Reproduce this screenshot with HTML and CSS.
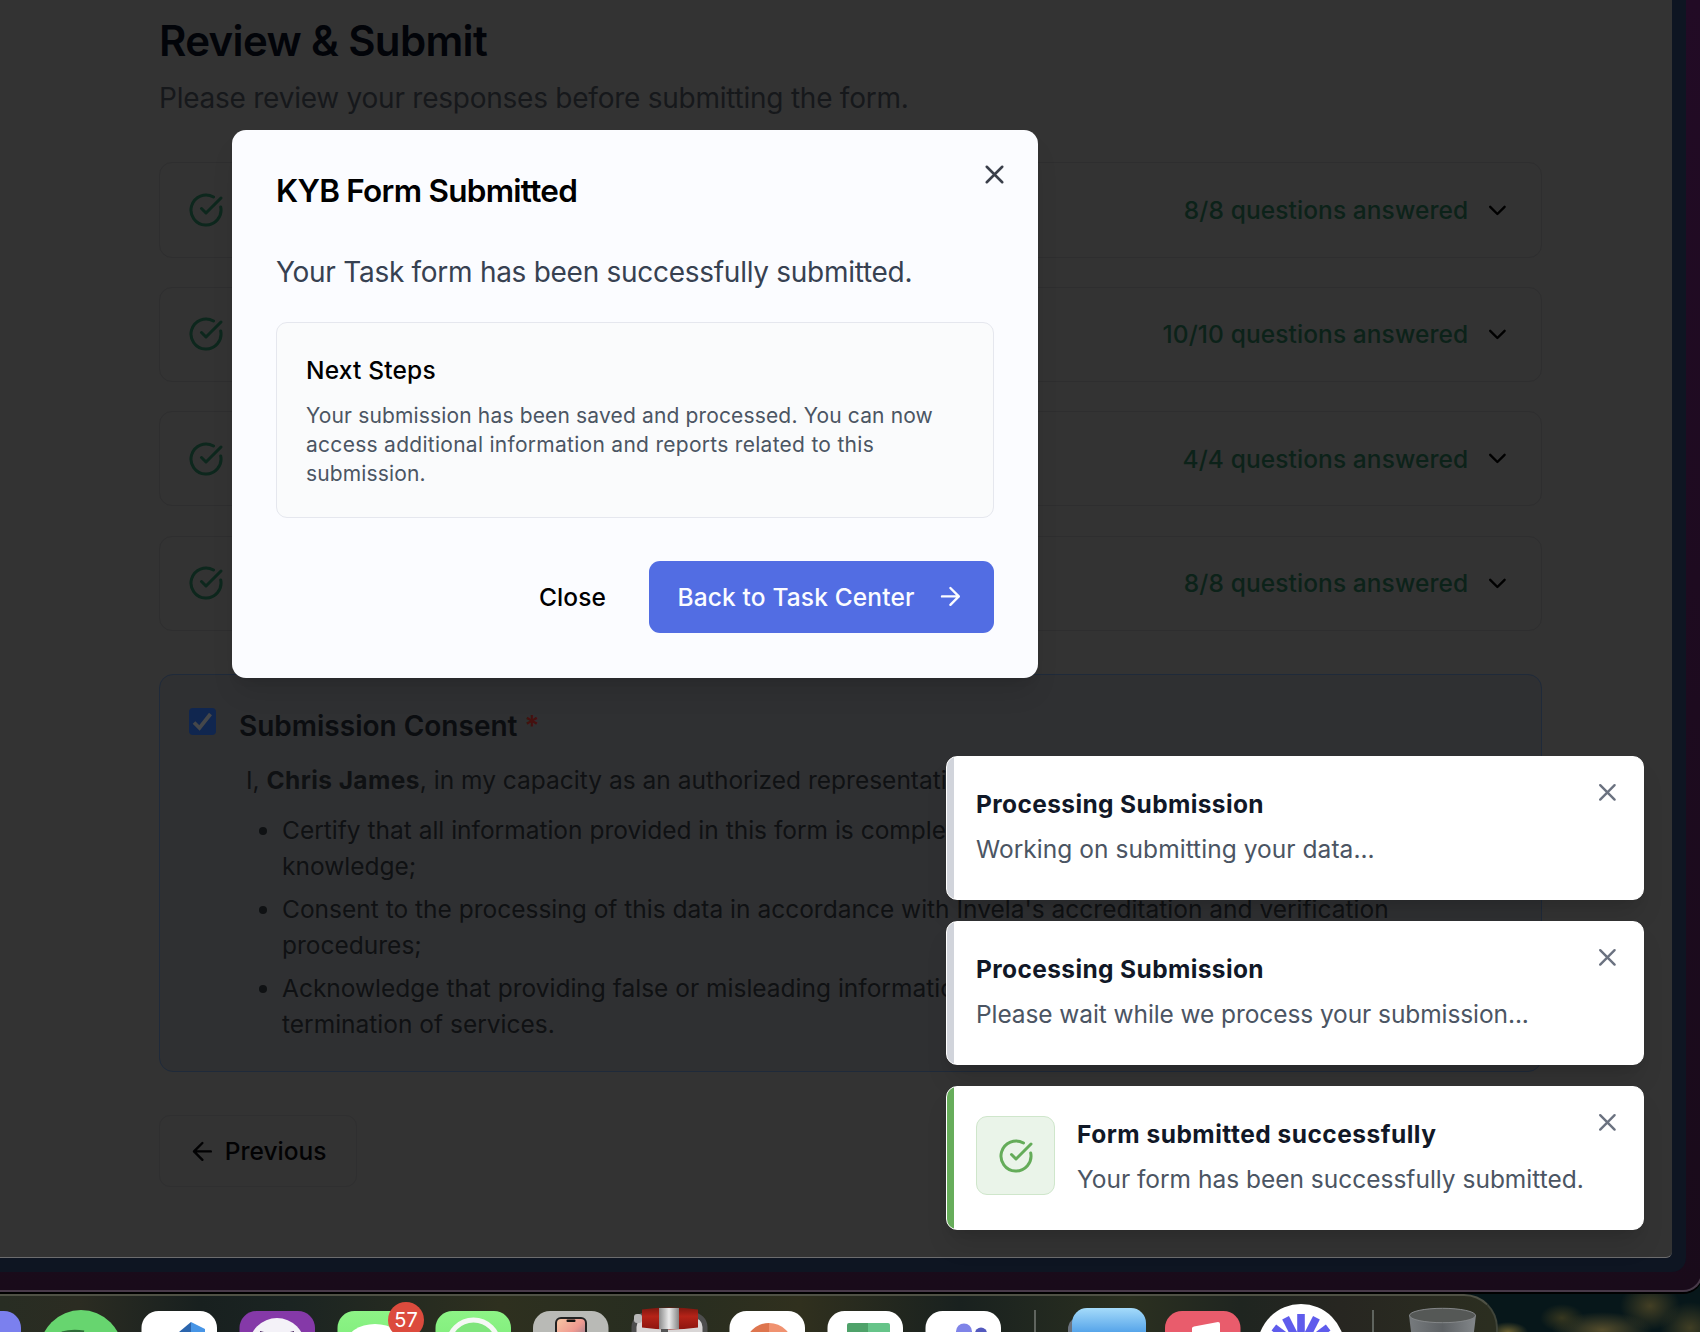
FILE: index.html
```
<!DOCTYPE html>
<html lang="en">
<head>
<meta charset="utf-8">
<title>KYB Form</title>
<link rel="stylesheet" href="styles.css">
</head>
<body>
<svg width="0" height="0" class="defs" aria-hidden="true">
  <symbol id="check" viewBox="0 0 24 24"><path d="M21.801 10A10 10 0 1 1 17 3.335"/><path d="m9 11 3 3L22 4"/></symbol>
  <symbol id="chevron" viewBox="0 0 24 24"><path d="m6 9 6 6 6-6"/></symbol>
  <symbol id="x" viewBox="0 0 24 24"><path d="M18 6 6 18M6 6l12 12"/></symbol>
</svg>
<div class="desktop">
  <div class="outer-window">
    <div class="inner-window">
      <main class="page">
        <h1 class="title">Review &amp; Submit</h1>
        <p class="subtitle">Please review your responses before submitting the form.</p>
        <div class="rows">
          <div class="row"><svg class="icon row-check"><use href="#check"/></svg><span class="count">8/8 questions answered</span><svg class="icon chevron"><use href="#chevron"/></svg></div>
          <div class="row"><svg class="icon row-check"><use href="#check"/></svg><span class="count">10/10 questions answered</span><svg class="icon chevron"><use href="#chevron"/></svg></div>
          <div class="row"><svg class="icon row-check"><use href="#check"/></svg><span class="count">4/4 questions answered</span><svg class="icon chevron"><use href="#chevron"/></svg></div>
          <div class="row"><svg class="icon row-check"><use href="#check"/></svg><span class="count">8/8 questions answered</span><svg class="icon chevron"><use href="#chevron"/></svg></div>
        </div>
        <section class="consent">
          <span class="checkbox"><svg viewBox="0 0 27 27"><path d="M5 14.500 10.500 20 21.500 6"/></svg></span>
          <div class="consent-body">
            <h2 class="consent-title">Submission Consent <span class="star">*</span></h2>
            <p class="consent-intro">I, <strong>Chris James</strong>, in my capacity as an authorized representative:</p>
            <ul class="consent-list">
              <li>Certify that all information provided in this form is complete and accurate to my<br>knowledge;</li>
              <li>Consent to the processing of this data in accordance with Invela's accreditation and verification<br>procedures;</li>
              <li>Acknowledge that providing false or misleading information may result in<br>termination of services.</li>
            </ul>
          </div>
        </section>
        <button class="previous"><svg class="icon arrow" viewBox="0 0 24 24"><path d="m12 19-7-7 7-7M19 12H5"/></svg><span>Previous</span></button>
      </main>
    </div>
  </div>

  <footer class="dock">
    <svg width="1500" height="38" viewBox="0 1294 1500 38">
      <defs>
        <linearGradient id="wa" x1="0" y1="0" x2="0" y2="1"><stop offset="0" stop-color="#8df486"/><stop offset="1" stop-color="#70e36f"/></linearGradient>
        <linearGradient id="sky" x1="0" y1="0" x2="0" y2="1"><stop offset="0" stop-color="#a5dbfa"/><stop offset=".35" stop-color="#4e9fe8"/></linearGradient>
        <linearGradient id="chrome" x1="0" y1="0" x2="1" y2="0"><stop offset="0" stop-color="#8b8b8b"/><stop offset=".5" stop-color="#ececec"/><stop offset="1" stop-color="#858585"/></linearGradient>
        <linearGradient id="red" x1="0" y1="0" x2="0" y2="1"><stop offset="0" stop-color="#7c170f"/><stop offset=".4" stop-color="#b52318"/><stop offset="1" stop-color="#8d150e"/></linearGradient>
        <linearGradient id="bin" x1="0" y1="0" x2="1" y2="0"><stop offset="0" stop-color="#777b7e"/><stop offset=".5" stop-color="#5d6164"/><stop offset="1" stop-color="#83878a"/></linearGradient>
        <linearGradient id="phone" x1="0" y1="0" x2="1" y2="1"><stop offset="0" stop-color="#f7c9a5"/><stop offset=".5" stop-color="#ef9a91"/><stop offset="1" stop-color="#6c6f8c"/></linearGradient>
      </defs>
      <rect x="-55" y="1311" width="76" height="76" rx="17" fill="#7b80ee"/>
      <circle cx="81" cy="1351.500" r="41.500" fill="#67d56f"/>
      <path d="M62 1333q10-3 22-1" stroke="#2f6b38" stroke-width="3" fill="none"/>
      <rect x="141.500" y="1311" width="75.500" height="76" rx="17" fill="#fff"/>
      <path d="M191 1322 179 1332h12z" fill="#2b65ad"/><path d="M191 1322l14 7v3h-14z" fill="#4795e6"/>
      <rect x="239.500" y="1311" width="75.500" height="76" rx="17" fill="#8539a8"/>
      <circle cx="277" cy="1346" r="28" fill="#f4f2f8"/><path d="M260 1332v-1l4 1zM290 1332l4-1v1z" fill="#44235c"/>
      <rect x="337.500" y="1311" width="75.500" height="76" rx="17" fill="url(#wa)"/>
      <ellipse cx="375" cy="1344" rx="29" ry="20" fill="#fff"/>
      <circle cx="406" cy="1320" r="18" fill="#dc4b3d"/>
      <text x="406" y="1327" text-anchor="middle" class="badge-text">57</text>
      <rect x="435.500" y="1311" width="75.500" height="76" rx="17" fill="url(#wa)"/>
      <circle cx="473.500" cy="1345" r="25" fill="#7fe57c" stroke="#f5f8f5" stroke-width="5"/>
      <rect x="533" y="1311" width="75.500" height="76" rx="17" fill="#b9bab6"/>
      <rect x="556" y="1318" width="30" height="30" rx="5" fill="url(#phone)" stroke="#222" stroke-width="2"/><rect x="566.500" y="1319.500" width="9" height="2.500" rx="1" fill="#111"/>
      <rect x="634" y="1315" width="71" height="50" rx="12" fill="#d9d6d6" stroke="#4e4e4e" stroke-width="5"/>
      <rect x="634" y="1314" width="8" height="9" rx="3" fill="#b7b7b7"/>
      <path d="M642 1309.500q28-4 56 0v18q-28 4-56 0z" fill="url(#red)"/>
      <rect x="659" y="1308" width="20" height="21" fill="url(#chrome)"/><rect x="661" y="1329" width="7" height="4" fill="#555"/>
      <rect x="729.500" y="1311" width="75.500" height="76" rx="17" fill="#fff"/>
      <path d="M769 1323a24 24 0 0 0-24 24h24z" fill="#de754e"/><path d="M769 1323a24 24 0 0 1 24 24h-24z" fill="#f09270"/>
      <rect x="827.500" y="1311" width="75.500" height="76" rx="17" fill="#fff"/>
      <path d="M847 1332v-7q0-2 2-2h19v9z" fill="#4fa26a"/><path d="M868 1323h20q2 0 2 2v7h-22z" fill="#66c489"/>
      <rect x="925.500" y="1311" width="75.500" height="76" rx="17" fill="#fff"/>
      <circle cx="964" cy="1331.500" r="8" fill="#7f84e8"/><circle cx="981" cy="1333.500" r="6" fill="#5359be"/>
      <rect x="1034" y="1310" width="2" height="22" fill="#5f645e"/>
      <rect x="1068" y="1317" width="60" height="60" rx="12" fill="#6c7480"/>
      <rect x="1072" y="1308" width="74" height="76" rx="15" fill="url(#sky)"/>
      <rect x="1165" y="1311" width="75.500" height="76" rx="17" fill="#e95c6c"/>
      <path d="M1192 1332v-4q0-1 2-1.600l24-4.400q2 0 2 2v8z" fill="#fff"/>
      <circle cx="1301" cy="1347.500" r="43.500" fill="#fff"/>
      <g fill="#5f5cec"><rect id="ray" x="1297.200" y="1314" width="7.600" height="34"/><use href="#ray" transform="rotate(27 1301 1348)"/><use href="#ray" transform="rotate(-27 1301 1348)"/><use href="#ray" transform="rotate(53 1301 1348)"/><use href="#ray" transform="rotate(-53 1301 1348)"/></g>
      <rect x="1372" y="1310" width="2" height="22" fill="#5f645e"/>
      <path d="M1409 1315 1412 1340h61l3-25z" fill="url(#bin)"/><ellipse cx="1442.500" cy="1315.500" rx="33" ry="7.200" fill="#555856" stroke="#85888a" stroke-width="1"/>
    </svg>
  </footer>

  <div class="modal" role="dialog">
    <svg class="icon modal-x"><use href="#x"/></svg>
    <h2 class="modal-title">KYB Form Submitted</h2>
    <p class="modal-text">Your Task form has been successfully submitted.</p>
    <div class="steps">
      <h3 class="steps-title">Next Steps</h3>
      <p class="steps-text">Your submission has been saved and processed. You can now<br><span class="wide">access additional information and reports related to this</span><br>submission.</p>
    </div>
    <div class="actions">
      <button class="close">Close</button>
      <button class="primary"><span>Back to Task Center</span><svg class="icon arrow" viewBox="0 0 24 24"><path d="M5 12h14M12 5l7 7-7 7"/></svg></button>
    </div>
  </div>

  <div class="toasts">
    <div class="toast">
      <div><h4 class="toast-title">Processing Submission</h4><p class="toast-text">Working on submitting your data...</p></div>
      <svg class="icon toast-x"><use href="#x"/></svg>
    </div>
    <div class="toast">
      <div><h4 class="toast-title">Processing Submission</h4><p class="toast-text waiting">Please wait while we process your submission...</p></div>
      <svg class="icon toast-x"><use href="#x"/></svg>
    </div>
    <div class="toast success">
      <span class="toast-icon"><svg class="icon"><use href="#check"/></svg></span>
      <div><h4 class="toast-title">Form submitted successfully</h4><p class="toast-text">Your form has been successfully submitted.</p></div>
      <svg class="icon toast-x"><use href="#x"/></svg>
    </div>
  </div>
</div>
</body>
</html>
```
FILE: styles.css
```
* { box-sizing: border-box; margin: 0; padding: 0; }
body { width: 1700px; height: 1332px; overflow: hidden; font-family: Inter, "Liberation Sans", sans-serif; font-size: 24.5px; line-height: 36px; background: #000; }
button { font: inherit; border: 0; background: none; letter-spacing: inherit; }
.defs { position: absolute; }
.icon { fill: none; stroke: currentColor; stroke-width: 2; stroke-linecap: round; stroke-linejoin: round; flex: none; }

.desktop {
  position: relative; width: 1700px; height: 1332px; overflow: hidden;
  background:
    radial-gradient(ellipse 22px 14px at 1562px 1318px, #37371f, transparent),
    radial-gradient(ellipse 50px 18px at 1602px 1330px, #554d2c, transparent),
    radial-gradient(ellipse 30px 24px at 1650px 1306px, #433f24, transparent),
    radial-gradient(ellipse 30px 26px at 1690px 1328px, #403e24, transparent),
    radial-gradient(ellipse 20px 10px at 1508px 1332px, #6b6030, transparent),
    #07171a;
}
.outer-window { width: 1703px; height: 1292px; padding-right: 17px; border-bottom: 2px solid #483a49; border-right: 2px solid #483a49; border-radius: 0 0 20px 0; background: linear-gradient(#220b25, #190b1a); box-shadow: 0 2px 0 #000; }
.inner-window { width: 1686px; height: 1272px; border-radius: 0 0 14px 0; background: #0e1522; }
.page { width: 1672px; height: 1258px; padding: 15px 130px 0 159px; background: #333; border-bottom: 1px solid #6c6c6e; border-radius: 0 0 6px 0; }

.title { font-size: 42px; line-height: 52px; font-weight: 600; letter-spacing: -.65px; color: #020409; }
.subtitle { margin-top: 13px; font-size: 28px; line-height: 36px; letter-spacing: -.24px; color: #16181b; }
.rows { display: flex; flex-direction: column; gap: 29.200px; margin-top: 46.400px; }
.row { display: flex; align-items: center; height: 95.200px; padding: 0 28px; border: 1px solid #2e2e2f; border-radius: 13px; }
.row-check { width: 36px; height: 36px; color: #0d271d; }
.count { margin-left: auto; font-weight: 500; letter-spacing: .09px; color: #0c2219; }
.chevron { width: 28.800px; height: 28.800px; margin: 0 1px 0 15px; color: #000; }

.consent { display: flex; margin-top: 43.600px; height: 397.800px; padding: 32.500px 29px; background: #2f3032; border: 1px solid #1f2a3a; border-radius: 14px; }
.checkbox { flex: none; width: 27px; height: 27px; border-radius: 4px; background: #10264f; }
.checkbox svg { display: block; fill: none; stroke: #45474a; stroke-width: 3.800; }
.consent-body { margin-left: 23px; }
.consent-title { font-size: 28px; line-height: 36px; font-weight: 600; color: #0b0d10; }
.star { color: #45110f; }
.consent-intro { margin: 18px 0 14px 7px; color: #0f1113; }
.consent-intro strong { letter-spacing: .4px; }
.consent-list { display: flex; flex-direction: column; gap: 7.200px; padding-left: 43px; color: #0f1113; white-space: nowrap; }

.previous { display: flex; align-items: center; gap: 8px; width: 198px; height: 72px; margin-top: 43px; padding-left: 28px; border: 1px solid #2f2f30; border-radius: 11px; font-weight: 500; color: #020203; }
.arrow { width: 28.800px; height: 28.800px; }

.dock { width: 1498px; height: 38px; overflow: hidden; margin-top: 2px; border-top: 2px solid #4f5145; border-right: 2px solid #40453a; border-radius: 0 34px 0 0; background: linear-gradient(90deg, #282d23 0, #2b2c22 80px, #18201f 200px, #1b2422 290px, #2e301f 500px, #272d20 660px, #30301e 800px, #19211f 960px, #2b3020 1130px, #1f2520 1240px, #272621 1340px, #2b2e20 1490px); }
.dock svg { display: block; margin-top: -2px; }
.badge-text { font-size: 20px; fill: #fff; }

.modal { position: absolute; left: 232px; top: 130px; width: 806px; height: 548px; padding: 40.500px 44px 0; border-radius: 14px; background: #fbfcff; box-shadow: 0 18px 27px -5px rgba(0,0,0,.1), 0 7px 11px -7px rgba(0,0,0,.1); }
.modal-x { position: absolute; right: 28px; top: 29px; width: 31px; height: 31px; color: #3a3f4a; }
.modal-title { font-size: 31.5px; line-height: 40px; font-weight: 600; letter-spacing: -.74px; color: #000; }
.modal-text { margin-top: 43px; font-size: 28px; line-height: 36px; letter-spacing: -.28px; color: #374151; }
.steps { height: 196px; margin-top: 32px; padding: 29px 29px; border: 1px solid #e5e7ee; border-radius: 11px; background: #fafbfc; }
.steps-title { font-size: 24.5px; line-height: 36px; font-weight: 500; letter-spacing: .18px; color: #000; }
.steps-text { margin-top: 14.500px; font-size: 21px; line-height: 28.8px; letter-spacing: .15px; color: #4b5563; white-space: nowrap; }
.steps-text .wide { letter-spacing: .28px; }
.actions { display: flex; justify-content: flex-end; gap: 14px; margin-top: 43px; }
.close { height: 72px; padding: 0 29px; font-weight: 500; letter-spacing: .1px; }
.primary { display: flex; align-items: center; justify-content: space-between; width: 345px; height: 72px; padding: 0 29px 0 28.500px; border-radius: 11px; font-weight: 500; letter-spacing: .14px; color: #fbfcff; background: #526de3; }

.toasts { position: absolute; left: 946px; top: 756px; display: flex; flex-direction: column; gap: 21px; width: 698px; }
.toast { position: relative; display: flex; height: 144px; padding: 29px 30px 0 29px; border: 1px solid #fff; border-radius: 11px; background: linear-gradient(90deg, #d1d4db 7px, #fff 7px); box-shadow: 0 18px 27px -5px rgba(0,0,0,.12), 0 7px 11px -7px rgba(0,0,0,.1); }
.toast.success { background: linear-gradient(90deg, #67ad5b 7px, #fff 7px); }
.toast-title { font-size: 24.5px; line-height: 36px; font-weight: 700; letter-spacing: .38px; color: #111827; }
.success .toast-title { letter-spacing: .49px; }
.toast-text { margin-top: 9px; letter-spacing: .05px; color: #4b5563; }
.toast-text.waiting { letter-spacing: -.09px; }
.success .toast-text { letter-spacing: -.01px; }
.toast-x { position: absolute; right: 21px; top: 21px; width: 28.800px; height: 28.800px; color: #6b7280; }
.toast-icon { display: grid; place-items: center; width: 79px; height: 79px; margin-right: 22px; border: 1px solid #cfe6cb; border-radius: 11px; background: #eaf4e9; color: #64ac59; }
.toast-icon svg { width: 36px; height: 36px; }
```
